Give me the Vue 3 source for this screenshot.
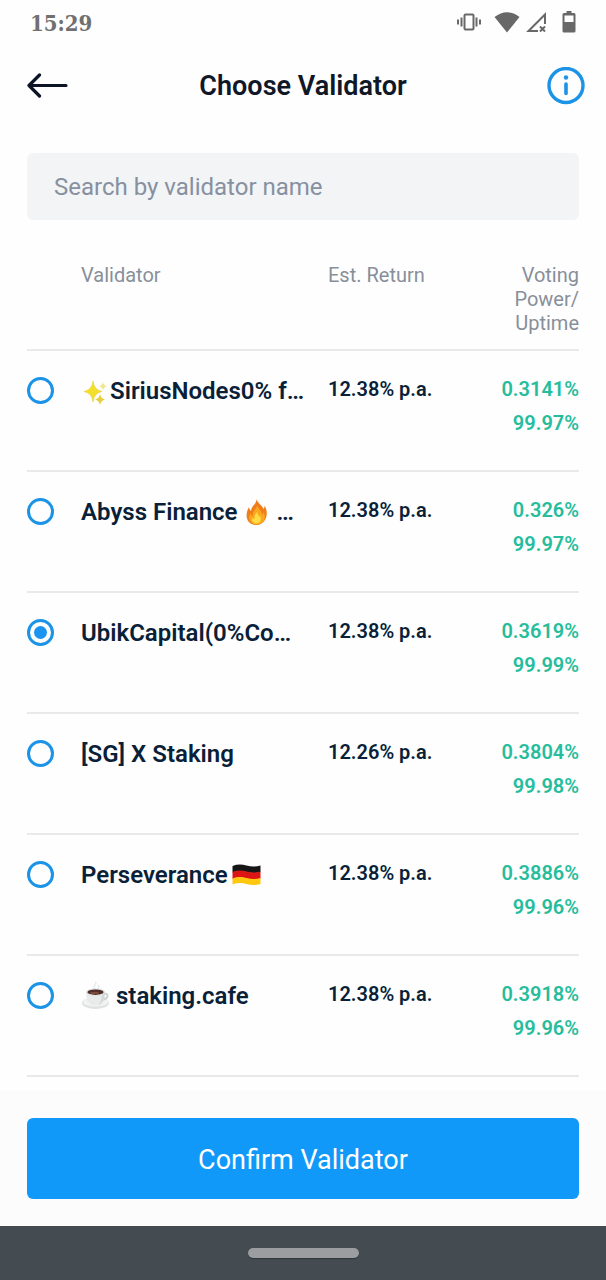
<script setup>
import { ref } from 'vue'

const query = ref('')
const selected = ref('ubik')

const validators = [
  { id: 'sirius', before: 'sparkles', name: 'SiriusNodes0% f…', ret: '12.38% p.a.', power: '0.3141%', uptime: '99.97%' },
  { id: 'abyss', name: 'Abyss Finance', after: 'fire', tail: '…', ret: '12.38% p.a.', power: '0.326%', uptime: '99.97%' },
  { id: 'ubik', name: 'UbikCapital(0%Co…', ret: '12.38% p.a.', power: '0.3619%', uptime: '99.99%' },
  { id: 'sg', name: '[SG] X Staking', ret: '12.26% p.a.', power: '0.3804%', uptime: '99.98%' },
  { id: 'perseverance', name: 'Perseverance', after: 'flag', ret: '12.38% p.a.', power: '0.3886%', uptime: '99.96%' },
  { id: 'cafe', before: 'coffee', name: 'staking.cafe', ret: '12.38% p.a.', power: '0.3918%', uptime: '99.96%' },
]
</script>

<template>
  <div class="screen">
    <div class="status">
      <span class="time">15:29</span>
      <div class="status-icons">
        <svg class="vibrate" width="26" height="24" viewBox="0 0 26 24" fill="none" stroke="#686868" stroke-width="2">
          <rect x="8.500" y="3.500" width="9" height="15" rx="1" />
          <path d="M5.500 6.500v9M2 8.500v5M20.500 6.500v9M24 8.500v5" />
        </svg>
        <svg width="26" height="24" viewBox="0 0 26 24">
          <path d="M13 21.500L.5 6Q13-3.500 25.500 6Z" fill="#686868" />
        </svg>
        <svg width="22" height="24" viewBox="0 0 22 24" fill="none" stroke="#686868" stroke-width="2">
          <path d="M12 20H2.500L19 3.500V13" />
          <path d="M14 15.500l5 5M19 15.500l-5 5" />
        </svg>
        <svg class="battery" width="14" height="24" viewBox="0 0 14 24">
          <path d="M4.500 0h5v2H12a1.500 1.500 0 0 1 1.500 1.500v16.500A1.500 1.500 0 0 1 12 21.500H2A1.500 1.500 0 0 1 .5 20V3.500A1.500 1.500 0 0 1 2 2h2.500zM2.500 4.500V11h9V4.500z" fill="#686868" fill-rule="evenodd" />
        </svg>
      </div>
    </div>

    <header class="header">
      <button class="icon-button" type="button" aria-label="Back">
        <svg width="48" height="26" viewBox="-6 0 48 26" fill="none" stroke="#0c1426" stroke-width="3.200" stroke-linecap="round" stroke-linejoin="round">
          <path d="M39 12.500H2M12.500 2L2 12.500l10.500 10.500" />
        </svg>
      </button>
      <h1>Choose Validator</h1>
      <button class="icon-button info" type="button" aria-label="Information">
        <svg width="38" height="38" viewBox="0 0 38 38">
          <circle cx="19" cy="18.500" r="17" fill="none" stroke="#1b93e6" stroke-width="3.400" />
          <circle cx="19" cy="10.500" r="2.200" fill="#1b93e6" />
          <path d="M19 17v9.500" stroke="#1b93e6" stroke-width="3.600" stroke-linecap="round" />
        </svg>
      </button>
    </header>

    <main class="content">
      <input v-model="query" class="search" type="text" placeholder="Search by validator name" aria-label="Search by validator name" />

      <table class="list">
        <thead>
          <tr>
            <td class="col-radio"></td>
            <th class="col-name" scope="col">Validator</th>
            <th class="col-return" scope="col">Est. Return</th>
            <th class="col-power" scope="col">Voting<br />Power/<br />Uptime</th>
          </tr>
        </thead>
        <tbody>
          <tr v-for="v in validators" :key="v.id">
            <td>
              <input :id="v.id" v-model="selected" class="radio" type="radio" name="validator" :value="v.id" />
            </td>
            <td>
              <label class="name" :for="v.id">
                <svg v-if="v.before === 'sparkles'" class="emoji" width="29" height="28" viewBox="0 0 29 28">
                  <path d="M12 4Q13 13 21 14.500Q13 16 12 25Q11 16 3 14.500Q11 13 12 4Z" fill="#f4df2c" stroke="#e8cf3a" stroke-width=".6" />
                  <path d="M19 17Q19.800 21.500 24 22.500Q19.800 23.500 19 28Q18.200 23.500 14 22.500Q18.200 21.500 19 17Z" fill="#e6cf3a" />
                  <path d="M22 5Q22.600 8.500 26 9.200Q22.600 10 22 13.500Q21.400 10 18 9.200Q21.400 8.500 22 5Z" fill="#f2e58b" />
                </svg>
                <svg v-if="v.before === 'coffee'" class="emoji spaced-after" width="29" height="28" viewBox="0 0 29 28">
                  <path d="M14 7q-2-2 0-4t0-3M17 7q2-2 0-4" fill="none" stroke="#e6e8ea" stroke-width="1.200" />
                  <ellipse cx="14.500" cy="21" rx="13.500" ry="6" fill="#dfe1e2" />
                  <ellipse cx="14.500" cy="19.800" rx="12.500" ry="4.800" fill="#f1f2f2" />
                  <path d="M22 12.500q5-2 4.500 1.500t-6.500 4" fill="none" stroke="#cfd2d3" stroke-width="2" />
                  <path d="M5 10q0 12 7 13h5q7-1 7-13z" fill="#e9ebeb" />
                  <path d="M17 23q7-1 7-13l-3 3q-1 8-4 10z" fill="#d5d8d9" />
                  <ellipse cx="14.500" cy="10" rx="9.500" ry="3.600" fill="#d9dcdd" />
                  <ellipse cx="14.500" cy="10.200" rx="8" ry="2.700" fill="#4e2d26" />
                  <ellipse cx="13.500" cy="11" rx="4.500" ry="1.200" fill="#7a4a3d" />
                </svg>
                <span>{{ v.name }}</span>
                <svg v-if="v.after === 'fire'" class="emoji spaced-before" width="29" height="28" viewBox="0 0 29 28">
                  <path d="M14.500 1C16 6 21 8 21.500 11Q22.800 9.500 22.500 7.500C27 14 25 26 14.500 27C4 26.500 2.500 17 7 9Q7.500 12 9 13C9 8 15 6 14.500 1Z" fill="#ef7d1a" />
                  <path d="M15 7C16 11 20 13 20 17Q21.500 16 21.800 14C25 22 20 26.500 14.500 26.500C8 26.500 5.500 20 8.500 15Q9 18 11 18C10 13 15 11 15 7Z" fill="#fba81e" />
                  <path d="M15 14Q15.500 17.500 18.500 19Q20 24.500 14.500 25.500Q9 25 10.500 20Q11.500 21 12.500 21Q12 17 15 14Z" fill="#ffdc45" />
                </svg>
                <svg v-if="v.after === 'flag'" class="emoji spaced-before" width="29" height="28" viewBox="0 0 29 28">
                  <path d="M.5 5Q7 2.500 14.500 4.500T28.500 4.500V11Q22 13 14.500 11T.5 11.500Z" fill="#161616" />
                  <path d="M.5 11Q7 8.500 14.500 10.500T28.500 10.500V17.500Q22 19.500 14.500 17.500T.5 18Z" fill="#dc1414" />
                  <path d="M.5 17.500Q7 15 14.500 17T28.500 17V23Q22 25 14.500 23T.5 23.500Z" fill="#fdc80e" />
                </svg>
                <span v-if="v.tail" class="tail">{{ v.tail }}</span>
              </label>
            </td>
            <td class="return">{{ v.ret }}</td>
            <td class="figures">
              <div>{{ v.power }}</div>
              <div>{{ v.uptime }}</div>
            </td>
          </tr>
        </tbody>
      </table>
    </main>

    <footer class="footer">
      <button class="confirm" type="button">Confirm Validator</button>
    </footer>
    <div class="navbar"><div class="pill"></div></div>
  </div>
</template>

<style>
body {
  margin: 0;
  background: #fefefe;
}
</style>

<style scoped>
.screen {
  display: flex;
  flex-direction: column;
  min-height: 100vh;
  font-family: Roboto, "Liberation Sans", sans-serif;
  color: #0a1f38;
}

.status {
  display: flex;
  justify-content: space-between;
  align-items: center;
  height: 45px;
  padding: 0 30px;
}

.time {
  font-family: "DejaVu Serif Condensed", "DejaVu Serif", serif;
  font-size: 22px;
  line-height: 28px;
  font-weight: 700;
  color: #707070;
}

.status-icons {
  display: flex;
  align-items: center;
  gap: 6px;
}

.vibrate {
  margin-right: 6px;
}

.battery {
  margin-left: 8px;
}

.header {
  display: grid;
  grid-template-columns: 1fr auto 1fr;
  align-items: center;
  height: 81px;
  padding: 0 21px;
}

.header h1 {
  margin: 0;
  font-size: 27px;
  line-height: 32px;
  font-weight: 600;
  color: #101828;
}

.icon-button {
  display: flex;
  justify-self: start;
  padding: 0;
  border: 0;
  background: none;
}

.info {
  justify-self: end;
}

.content {
  flex: 1;
  padding: 27px 27px 14px;
}

.search {
  display: block;
  box-sizing: border-box;
  width: 100%;
  height: 67px;
  padding: 0 27px;
  border: 0;
  border-radius: 6px;
  background: #f2f4f6;
  font: 400 24px/28px Roboto, "Liberation Sans", sans-serif;
  color: #0a1f38;
}

.search::placeholder {
  color: #8790a0;
  opacity: 1;
}

.list {
  width: 100%;
  margin-top: 43px;
  border-collapse: separate;
  border-spacing: 0;
  table-layout: fixed;
}

.list th,
.list td {
  padding: 0;
  border-bottom: 2px solid #e9e9eb;
  vertical-align: top;
  text-align: left;
}

.list th {
  padding-bottom: 14px;
  font-size: 20px;
  line-height: 24px;
  font-weight: 400;
  color: #878f9a;
}

.list tbody td {
  height: 93px;
  padding-top: 26px;
}

.col-radio {
  width: 54px;
}

.col-return {
  width: 126px;
}

.col-name {
  width: 247px;
}

.list .col-power,
.list .figures {
  text-align: right;
}

.radio {
  display: grid;
  place-content: center;
  appearance: none;
  box-sizing: border-box;
  width: 27px;
  height: 27px;
  margin: 0;
  border: 3px solid #1b93e6;
  border-radius: 50%;
}

.radio:checked::before {
  content: "";
  width: 13px;
  height: 13px;
  border-radius: 50%;
  background: #1b93f0;
}

.name {
  display: flex;
  align-items: center;
  font-size: 24px;
  line-height: 28px;
  font-weight: 600;
  white-space: nowrap;
}

.emoji {
  flex: none;
}

.spaced-before {
  margin-left: 4px;
}

.spaced-after {
  margin-right: 6px;
}

.tail {
  margin-left: 6px;
}

.return,
.figures {
  font-size: 20px;
  line-height: 24px;
  font-weight: 600;
}

.figures {
  color: #27bd9c;
}

.figures div + div {
  margin-top: 10px;
}

.footer {
  padding: 27px;
  background: #fcfcfc;
}

.confirm {
  display: block;
  width: 100%;
  height: 81px;
  padding: 2px 0 0;
  border: 0;
  border-radius: 6px;
  background: #1199fa;
  font: 400 27px/32px Roboto, "Liberation Sans", sans-serif;
  color: #fff;
}

.navbar {
  display: flex;
  justify-content: center;
  align-items: center;
  height: 54px;
  background: #444c52;
}

.pill {
  width: 111px;
  height: 10px;
  border-radius: 5px;
  background: #9c9da0;
  box-shadow: 0 1px 1px #30363a;
}
</style>
